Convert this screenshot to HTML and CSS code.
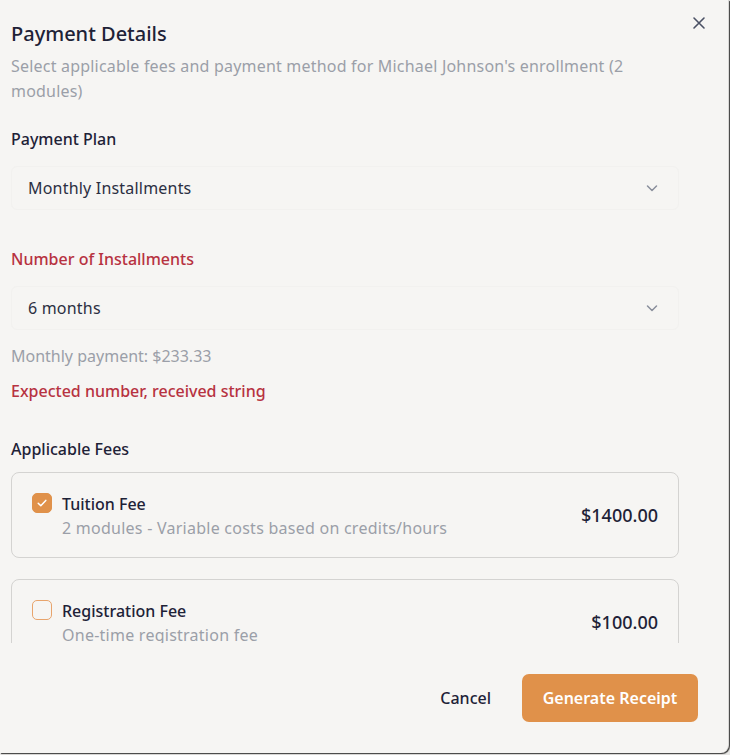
FILE: index.html
```html
<!DOCTYPE html>
<html lang="en">
<head>
<meta charset="utf-8">
<title>Payment Details</title>
<link rel="stylesheet" href="styles.css">
</head>
<body>
<div class="dialog">
  <button class="close" aria-label="Close">
    <svg width="14" height="14" viewBox="0 0 14 14"><path d="M2 2 L12 12 M12 2 L2 12" stroke="#4b5165" stroke-width="1.6" stroke-linecap="round" fill="none"/></svg>
  </button>
  <div class="scroll">
    <header class="head">
      <h2 class="title">Payment Details</h2>
      <p class="subtitle">Select applicable fees and payment method for Michael Johnson's enrollment (2 modules)</p>
    </header>

    <div class="field">
      <label class="label">Payment Plan</label>
      <div class="select"><span>Monthly Installments</span>
        <svg class="chev" width="14" height="14" viewBox="0 0 14 14"><path d="M2.5 5 L7 9.5 L11.5 5" stroke="#8a8f9c" stroke-width="1.5" fill="none" stroke-linecap="round" stroke-linejoin="round"/></svg>
      </div>
    </div>

    <div class="field">
      <label class="label error">Number of Installments</label>
      <div class="select"><span>6 months</span>
        <svg class="chev" width="14" height="14" viewBox="0 0 14 14"><path d="M2.5 5 L7 9.5 L11.5 5" stroke="#8a8f9c" stroke-width="1.5" fill="none" stroke-linecap="round" stroke-linejoin="round"/></svg>
      </div>
      <p class="hint">Monthly payment: $233.33</p>
      <p class="errmsg">Expected number, received string</p>
    </div>

    <div class="fees">
      <div class="label">Applicable Fees</div>
      <div class="card">
        <span class="check on"><svg width="12" height="12" viewBox="0 0 12 12"><path d="M2.2 6.2 L4.8 8.8 L9.8 3.4" stroke="#fff" stroke-width="1.5" fill="none" stroke-linecap="round" stroke-linejoin="round"/></svg></span>
        <div class="info">
          <div class="name">Tuition Fee</div>
          <div class="desc">2 modules - Variable costs based on credits/hours</div>
        </div>
        <div class="amount">$1400.00</div>
      </div>
      <div class="card">
        <span class="check"></span>
        <div class="info">
          <div class="name">Registration Fee</div>
          <div class="desc">One-time registration fee</div>
        </div>
        <div class="amount">$100.00</div>
      </div>
    </div>
  </div>
  <footer class="foot">
    <button class="btn ghost">Cancel</button>
    <button class="btn primary">Generate Receipt</button>
  </footer>
</div>
</body>
</html>
```
FILE: styles.css
```css
* { box-sizing: border-box; }
html, body { margin: 0; padding: 0; }
body {
  background: #e9e8e6;
  font-family: "Noto Sans", "Open Sans", sans-serif;
  color: #1e2237;
  width: 730px;
  height: 755px;
  overflow: hidden;
}
.dialog {
  position: relative;
  width: 729px;
  height: 753px;
  background: #f6f5f3;
  border-right: 1px solid #d9d8d6;
  border-bottom-right-radius: 8px;
  box-shadow: 1px 1px 1px rgba(0,0,0,0.75);
  display: flex;
  flex-direction: column;
}
.close {
  position: absolute;
  top: 15px;
  right: 21px;
  width: 16px;
  height: 16px;
  padding: 0;
  border: 0;
  background: none;
  display: flex;
  align-items: center;
  justify-content: center;
}
.scroll {
  height: 643px;
  overflow: hidden;
  padding: 0 49px 0 11px;
}
.head { padding-top: 20px; }
.title {
  margin: 0;
  font-size: 20px;
  font-weight: 500;
  line-height: 28px;
  color: #1e2237;
}
.subtitle {
  margin: 6px 0 0;
  font-size: 16px;
  line-height: 25px;
  letter-spacing: 0.2px;
  color: #9b9fa8;
}
.field { margin-top: 23px; }
.label {
  display: block;
  font-size: 16px;
  font-weight: 500;
  line-height: 24px;
  color: #1e2237;
}
.label.error { color: #b73241; }
.select {
  margin-top: 15px;
  height: 44px;
  border: 1px solid #f2f1ef;
  border-radius: 6px;
  display: flex;
  align-items: center;
  justify-content: space-between;
  padding: 0 19px 0 16px;
  font-size: 16px;
  letter-spacing: 0.2px;
  color: #2b2f42;
}
.chev { margin-top: -1px; }
.field + .field { margin-top: 37px; }
.hint {
  margin: 14px 0 0;
  font-size: 16px;
  line-height: 24px;
  color: #9b9fa8;
}
.errmsg {
  margin: 11px 0 0;
  font-size: 16px;
  font-weight: 500;
  line-height: 24px;
  color: #b73241;
}
.fees { margin-top: 34px; }
.fees .label { margin-bottom: 11px; }
.card {
  border: 1px solid #d4d3d1;
  border-radius: 8px;
  padding: 19px 20px 21px 20px;
  display: flex;
  align-items: center;
  gap: 10px;
  margin-bottom: 21px;
  height: 86px;
}
.check {
  align-self: flex-start;
  width: 20px;
  height: 20px;
  margin-top: 1px;
  border-radius: 5px;
  border: 1.5px solid #e8a46c;
  display: flex;
  align-items: center;
  justify-content: center;
  flex: none;
}
.check.on {
  background: #e0914a;
  border-color: #e0914a;
}
.info { flex: 1; align-self: flex-start; padding-top: 1px; }
.name {
  font-size: 16px;
  font-weight: 500;
  line-height: 23px;
  color: #1e2237;
}
.desc {
  font-size: 16px;
  line-height: 24px;
  letter-spacing: 0.25px;
  color: #9b9fa8;
}
.amount {
  font-size: 18px;
  font-weight: 500;
  color: #1e2237;
  margin-top: 1px;
}
.foot {
  flex: 1;
  display: flex;
  justify-content: flex-end;
  align-items: center;
  gap: 10px;
  padding: 0 30px 0 0;
}
.btn {
  font-family: inherit;
  font-size: 16px;
  font-weight: 600;
  border: 0;
  height: 48px;
  border-radius: 7px;
  cursor: pointer;
}
.btn.ghost {
  background: none;
  color: #1e2237;
  font-weight: 500;
  padding: 0 21px;
}
.btn.primary {
  background: #e0914a;
  color: #fff;
  width: 176px;
}
```
